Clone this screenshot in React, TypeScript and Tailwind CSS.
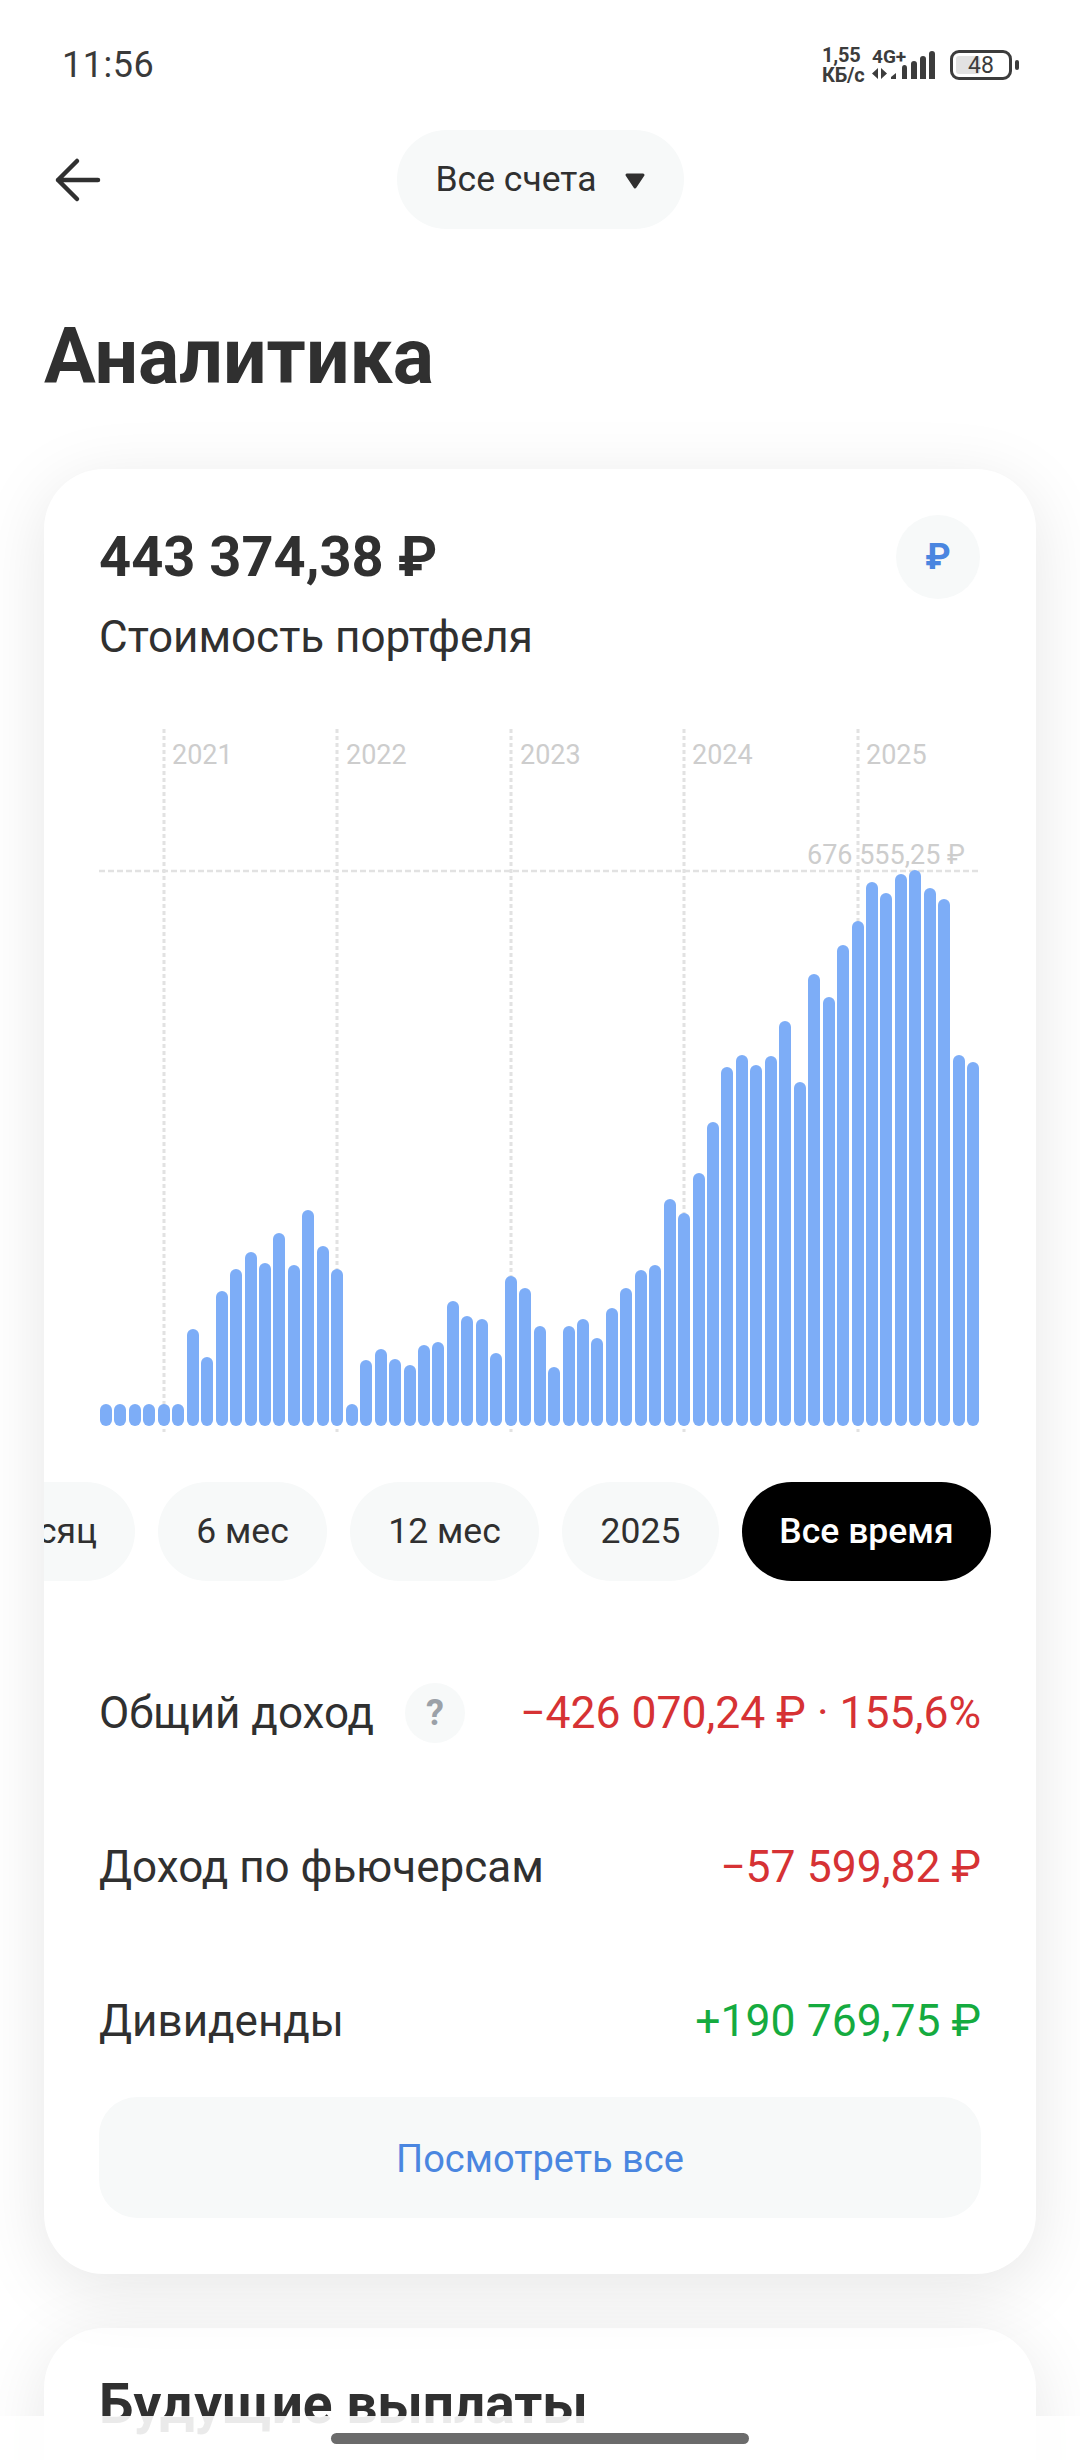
const tops = [1492,1492,1492,1492,1492,1492,1328,1390,1247,1197,1161,1186,1119,1190,1070,1148,1197,1492,1396,1372,1394,1407,1363,1357,1267,1300,1308,1381,1213,1240,1322,1411,1322,1307,1349,1283,1240,1200,1189,1045,1076,990,877,757,733,754,735,657,791,556,605,492,439,355,379,337,329,368,393,732,747];

const years = [
  { label: "2021", left: 73 },
  { label: "2022", left: 247 },
  { label: "2023", left: 421 },
  { label: "2024", left: 593 },
  { label: "2025", left: 767 },
];

function StatusIcons() {
  return (
    <div className="flex items-center">
      <div className="flex flex-col text-[20px] leading-[20px] font-bold text-[#3c3c3c] w-[49px] tracking-[-0.2px]">
        <span>1,55</span>
        <span>КБ/с</span>
      </div>
      <svg width="66" height="34" viewBox="0 0 66 34" className="overflow-visible">
        <text x="1" y="15" fontSize="19" fontWeight="700" fill="#3c3c3c" fontFamily="Roboto">4G+</text>
        <path d="M7 20v11l-6-5.500zM10 20v11l6-5.500z" fill="#3c3c3c" />
        <path d="M20 31v-2l5-4v6zM31 31v-11q0-3 2.500-3t2.500 3v11zM40 31v-15q0-3 3-3t3 3v15zM49 31v-20q0-3 3-3t3 3v20zM58 31v-25q0-3 3-3t3 3v25z" fill="#3c3c3c" />
      </svg>
      <div className="ml-[13px] relative w-[62px] h-[30px] rounded-[9px] border-[3px] border-[#3c3c3c] flex items-center justify-center p-[3px]">
        <div className="absolute left-[3px] top-[3px] bottom-[3px] w-[24px] rounded-[3px] bg-[#e2e2e2]" />
        <span className="relative text-[23px] leading-none text-[#3c3c3c]">48</span>
      </div>
      <div className="ml-[3px] w-[4px] h-[10px] rounded-full bg-[#3c3c3c]" />
    </div>
  );
}

function Chart() {
  return (
    <div className="relative mt-[67px] h-[703px]">
      <svg className="absolute inset-0" width="882" height="703" viewBox="0 0 882 703">
        {[65, 238, 412, 585, 759].map((x) => (
          <line key={x} x1={x} x2={x} y1="0" y2="703" stroke="#e2e2e2" strokeWidth="3" strokeDasharray="4 3" />
        ))}
        <line x1="0" x2="880" y1="142" y2="142" stroke="#e2e2e2" strokeWidth="2.500" strokeDasharray="6 3" />
      </svg>
      {years.map((y) => (
        <span key={y.label} className="absolute top-[11px] text-[27px] leading-[30px] text-[#cdcdcd]" style={{ left: y.left }}>
          {y.label}
        </span>
      ))}
      <span className="absolute right-[16px] top-[111px] text-[27px] leading-[30px] text-[#cdcdcd]">676 555,25 ₽</span>
      <div className="relative flex h-full items-end justify-between px-[1px] pb-[6px]">
        {tops.map((t, i) => (
          <div key={i} className="w-[12px] rounded-[6px] bg-[#7dadf7]" style={{ height: (1540 - t) / 2.178 }} />
        ))}
      </div>
    </div>
  );
}

function Pill({ children, active, className }: { children: React.ReactNode; active?: boolean; className?: string }) {
  return (
    <div className={`shrink-0 h-[99px] rounded-[50px] flex items-center justify-center text-[35.5px] ${active ? "bg-black text-white font-medium" : "bg-[#f7f9f9] text-[#303030]"} ${className ?? ""}`}>
      {children}
    </div>
  );
}

function Row({ label, value, color, help }: { label: string; value: string; color: string; help?: boolean }) {
  return (
    <div className="h-[154px] shrink-0 flex items-center justify-between">
      <div className="flex items-center text-[#303030]">
        <span>{label}</span>
        {help && (
          <span className="ml-[31px] w-[60px] h-[60px] rounded-full bg-[#f7f9f9] flex items-center justify-center text-[36px] font-bold text-[#9ba1a8]">?</span>
        )}
      </div>
      <span className={`text-[44.5px] ${color}`}>{value}</span>
    </div>
  );
}

export default function App() {
  return (
    <div className="relative w-[1080px] h-[2460px] overflow-hidden bg-white text-[#303030] font-['Roboto',sans-serif]">
      <div className="h-[130px] flex items-center justify-between pl-[62px] pr-[61px]">
        <span className="text-[36px] tracking-[0.5px] text-[#3a3a3a]">11:56</span>
        <StatusIcons />
      </div>

      <div className="grid grid-cols-[1fr_auto_1fr] items-center h-[99px] pl-[53px]">
        <svg width="50" height="46" viewBox="0 0 50 46" fill="none" stroke="#303030" strokeWidth="4.500" strokeLinecap="round" strokeLinejoin="round">
          <path d="M5 23h40M24 4 5 23l19 19" />
        </svg>
        <div className="w-[287px] h-[99px] -ml-[53px] rounded-[50px] bg-[#f7f9f9] flex items-center pl-[39px] text-[35.5px] text-[#303030]">
          <span>Все счета</span>
          <svg className="ml-[28px] mt-[3px]" width="22" height="18" viewBox="0 0 22 18">
            <path d="M3 3h16l-8 12z" fill="#303030" stroke="#303030" strokeWidth="3" strokeLinejoin="round" />
          </svg>
        </div>
      </div>

      <div className="h-[240px] pt-[16px] pl-[44px] flex items-center">
        <h1 className="text-[77px] leading-[84px] font-bold text-[#303030]">Аналитика</h1>
      </div>

      <section className="relative z-10 mx-[44px] h-[1805px] rounded-[60px] bg-white px-[55px] pt-[46px] text-[44px] shadow-[0_14px_70px_rgba(0,0,0,0.1)]">
        <div className="flex items-center justify-between">
          <span className="text-[56px] leading-[84px] font-bold">443 374,38 ₽</span>
          <span className="mr-[1px] w-[84px] h-[84px] rounded-full bg-[#f7f9f9] flex items-center justify-center text-[36px] font-bold text-[#4a86e0]">₽</span>
        </div>
        <div className="mt-[13px] leading-[50px]">Стоимость портфеля</div>

        <Chart />

        <div className="-mx-[55px] mt-[50px] pr-[45px] flex justify-end gap-[23px] overflow-hidden">
          <Pill className="w-[209px]">1 месяц</Pill>
          <Pill className="w-[169px]">6 мес</Pill>
          <Pill className="w-[189px]">12 мес</Pill>
          <Pill className="w-[157px]">2025</Pill>
          <Pill active className="w-[249px]">Все время</Pill>
        </div>

        <div className="mt-[55px] h-[461px] flex flex-col">
          <Row label="Общий доход" value="−426 070,24 ₽ · 155,6%" color="text-[#d63234]" help />
          <Row label="Доход по фьючерсам" value="−57 599,82 ₽" color="text-[#d63234]" />
          <Row label="Дивиденды" value="+190 769,75 ₽" color="text-[#15ab3f]" />
        </div>

        <div className="h-[121px] pt-[3px] rounded-[38px] bg-[#f7f9f9] flex items-center justify-center text-[38px] text-[#4a86e0]">
          Посмотреть все
        </div>
      </section>

      <section className="mx-[44px] mt-[54px] h-[600px] rounded-[60px] bg-white px-[55px] pt-[46px] shadow-[0_14px_70px_rgba(0,0,0,0.1)]">
        <h2 className="text-[55px] leading-[60px] font-bold text-[#303030]">Будущие выплаты</h2>
      </section>

      <div className="absolute left-0 right-0 bottom-0 z-20 h-[44px] bg-white/90 flex justify-center pt-[17px]">
        <div className="w-[418px] h-[11px] rounded-full bg-[#6b6b6b]" />
      </div>
    </div>
  );
}
